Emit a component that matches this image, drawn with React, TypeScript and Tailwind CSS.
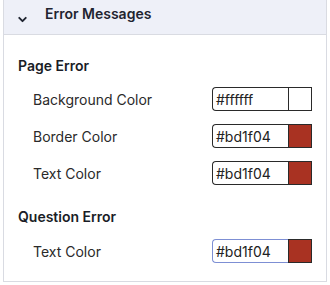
import {ChevronDown} from "lucide-react";

type Row = {label: string; value: string; focused?: boolean};

const sections: {title: string; rows: Row[]}[] = [
    {
        title: "Page Error",
        rows: [
            {label: "Background Color", value: "#ffffff"},
            {label: "Border Color", value: "#bd1f04"},
            {label: "Text Color", value: "#bd1f04"},
        ],
    },
    {
        title: "Question Error",
        rows: [{label: "Text Color", value: "#bd1f04", focused: true}],
    },
];

// swatch shows the picked colour a touch muted
const swatch: Record<string, string> = {"#ffffff": "#ffffff", "#bd1f04": "#a93222"};

function ColorInput({value, focused}: {value: string; focused?: boolean}) {
    return (
        <div className="flex h-6 w-[100px]">
            <div
                className={
                    focused
                        ? "flex-1 flex items-center pl-[3px] rounded-l-[4px] border border-r-0 border-[#7d8fd4] text-[14px] text-[#222]"
                        : "flex-1 flex items-center pl-[3px] rounded-l-[4px] border border-r-0 border-[#2a2a2a] text-[14px] text-[#222]"
                }
            >
                {value}
            </div>
            <div className="w-6 h-6 border border-[#2a2a2a]" style={{backgroundColor: swatch[value]}}/>
        </div>
    );
}

export default function App() {
    return (
        <div className="w-[330px] h-[285px] bg-white px-[3px] font-['Inter',sans-serif]">
            <div className="border-x border-b border-[#d9dbe2] pb-[18px]">
                <div className="h-[35px] bg-[#eef0f8] border-b border-[#d9dbe2] flex items-start pl-[12px] pt-[4px]">
                    <ChevronDown className="w-[13px] h-[13px] text-[#1f2430] mt-[9px]" strokeWidth={3.5}/>
                    <span className="ml-[16px] text-[14px] leading-5 font-semibold text-[#1f2430]">Error Messages</span>
                </div>
                <div className="px-[14px] pt-[21px]">
                    {sections.map((s, i) => (
                        <div key={s.title} className={i > 0 ? "mt-[22px]" : ""}>
                            <div className="text-[14px] leading-5 font-semibold text-[#1a1d26]">{s.title}</div>
                            <div className={i > 0 ? "mt-[12px] flex flex-col gap-[13px]" : "mt-[11px] flex flex-col gap-[13px]"}>
                                {s.rows.map((r) => (
                                    <div key={r.label} className="flex items-center justify-between pl-[15px]">
                                        <span className="text-[14px] text-[#2a2a2a]">{r.label}</span>
                                        <ColorInput value={r.value} focused={r.focused}/>
                                    </div>
                                ))}
                            </div>
                        </div>
                    ))}
                </div>
            </div>
        </div>
    );
}
